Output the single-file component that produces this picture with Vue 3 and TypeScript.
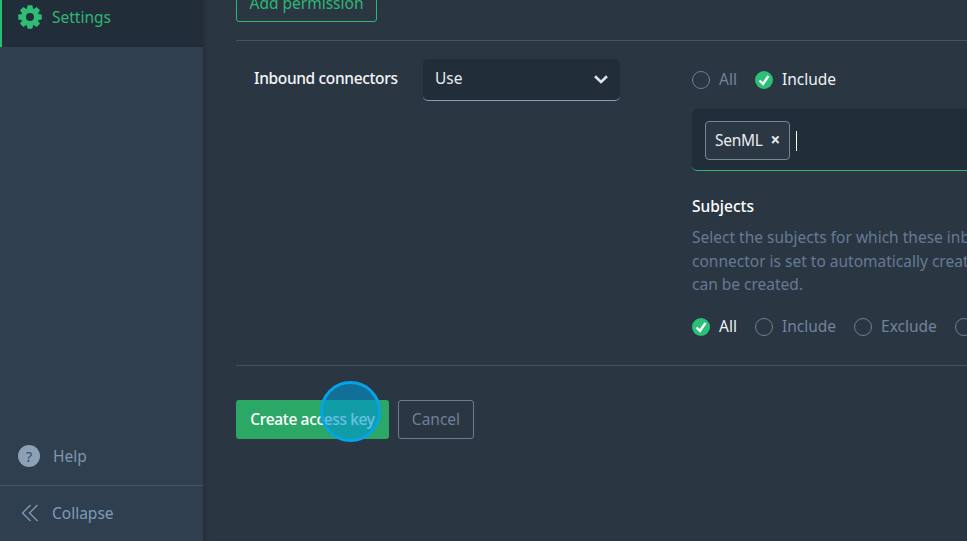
<script setup lang="ts">
const subjectOptions = [
  { label: 'All', checked: true },
  { label: 'Include', checked: false },
  { label: 'Exclude', checked: false },
  { label: '', checked: false }
]

// eight chunky teeth, same shape as the cog in the nav
function gearPath(): string {
  const pts: string[] = []
  for (let i = 0; i < 8; i++) {
    const a = (i * Math.PI) / 4 - Math.PI / 2
    const steps: [number, number][] = [[8.8, -0.36], [12, -0.2], [12, 0.2], [8.8, 0.36]]
    for (const [r, d] of steps) {
      pts.push(`${(12 + r * Math.cos(a + d)).toFixed(2)} ${(12 + r * Math.sin(a + d)).toFixed(2)}`)
    }
  }
  return `M${pts.join('L')}ZM12 8a4 4 0 1 0 0 8 4 4 0 0 0 0-8Z`
}
const gear = gearPath()
</script>

<template>
  <div class="page">
    <aside class="sidebar">
      <div class="nav-active">
        <svg class="gear" viewBox="0 0 24 24" width="24" height="24">
          <path fill-rule="evenodd" :d="gear" />
        </svg>
        <span>Settings</span>
      </div>
      <div class="sidebar-bottom">
        <div class="help">
          <span class="help-icon">?</span>
          <span>Help</span>
        </div>
        <div class="collapse">
          <svg viewBox="0 0 18 18" width="18" height="18" fill="none" stroke="currentColor" stroke-width="1.3">
            <path d="M9.500 1 1.500 9l8 8M16.500 1l-8 8 8 8" />
          </svg>
          <span>Collapse</span>
        </div>
      </div>
    </aside>

    <main class="content">
      <div class="top-row">
        <button class="btn-outline">Add permission</button>
      </div>
      <div class="permission">
        <div class="perm-label">Inbound connectors</div>
        <div class="select">
          <span>Use</span>
          <svg viewBox="0 0 14 9" width="14" height="9" fill="none" stroke="#dde3ea" stroke-width="2.600">
            <path d="M1 1.200 7 7l6-5.800" />
          </svg>
        </div>
        <div class="perm-detail">
          <div class="radios first">
            <label class="radio"><i class="circle" /><span>All</span></label>
            <label class="radio on"><i class="circle checked"><svg viewBox="0 0 18 18" width="18" height="18" fill="none" stroke="#fff" stroke-width="2.400"><path d="M4.500 9.500 8 13l5.500-8" /></svg></i><span>Include</span></label>
          </div>
          <div class="tag-input">
            <span class="chip">SenML <b>×</b></span>
            <span class="caret" />
          </div>
          <h4>Subjects</h4>
          <p>Select the subjects for which these inbound connectors can be used. If the<br>connector is set to automatically create subjects, only the selected subjects<br>can be created.</p>
          <div class="radios">
            <label v-for="opt in subjectOptions" :key="opt.label" class="radio" :class="{ on: opt.checked }">
              <i class="circle" :class="{ checked: opt.checked }">
                <svg v-if="opt.checked" viewBox="0 0 18 18" width="18" height="18" fill="none" stroke="#fff" stroke-width="2.400"><path d="M4.500 9.500 8 13l5.500-8" /></svg>
              </i>
              <span v-if="opt.label">{{ opt.label }}</span>
            </label>
          </div>
        </div>
      </div>
      <div class="actions">
        <button class="btn-primary">Create access key</button>
        <button class="btn-cancel">Cancel</button>
        <span class="click-dot" />
      </div>
    </main>
  </div>
</template>

<style>
html, body {
  margin: 0;
  overflow: hidden;
  background: #2b3643;
}
</style>

<style scoped>
.page {
  display: flex;
  width: 967px;
  height: 541px;
  overflow: hidden;
  font-family: "Noto Sans", "Open Sans", sans-serif;
  font-size: 15.500px;
  color: #fff;
}

.sidebar {
  width: 203px;
  flex: none;
  display: flex;
  flex-direction: column;
  background: #2f3f4f;
}

.nav-active {
  height: 47px;
  box-sizing: border-box;
  border-left: 2px solid #2bbd72;
  padding: 0 0 13px 16px;
  display: flex;
  align-items: center;
  gap: 10px;
  background: #222d3a;
  color: #2fb673;
}

.gear { fill: #2fbd75; }

.sidebar-bottom { margin-top: auto; }

.help {
  height: 55px;
  display: flex;
  align-items: center;
  padding: 0 0 4px 18px;
  box-sizing: border-box;
  gap: 13px;
  color: #7f96ad;
  border-bottom: 1px solid #43566a;
}

.help-icon {
  width: 22px;
  height: 22px;
  border-radius: 50%;
  background: #8ba1b8;
  color: #3d4d5e;
  display: flex;
  align-items: center;
  justify-content: center;
  font-size: 15px;
}

.collapse {
  height: 55px;
  display: flex;
  align-items: center;
  padding: 0 0 2px 21px;
  box-sizing: border-box;
  gap: 13px;
  color: #7f9bb7;
}

.content {
  flex: 1;
  min-width: 0;
  padding: 0 0 0 33px;
  box-shadow: inset 6px 0 6px -6px rgba(0, 0, 0, .25);
}

.top-row {
  height: 41px;
  box-sizing: border-box;
  display: flex;
  align-items: flex-end;
  padding-bottom: 18px;
  border-bottom: 1px solid #46525f;
}

.btn-outline {
  flex: none;
  width: 141px;
  height: 38px;
  padding: 0 0 1px;
  border: 1px solid #2fb673;
  border-radius: 3px;
  background: transparent;
  color: #2fb673;
  font: inherit;
}

.permission {
  display: flex;
  height: 325px;
  box-sizing: border-box;
  border-bottom: 1px solid #46525f;
  padding-top: 18px;
}

.perm-label {
  width: 187px;
  flex: none;
  padding: 8px 0 0 18px;
  box-sizing: border-box;
  font-weight: 500;
  color: #f2f5f7;
  white-space: nowrap;
  letter-spacing: -.35px;
}

.select {
  width: 197px;
  height: 42px;
  flex: none;
  box-sizing: border-box;
  display: flex;
  align-items: center;
  justify-content: space-between;
  padding: 0 12px;
  border-bottom: 1px solid #8aa0b6;
  border-radius: 5px;
  background: #222d3a;
  color: #e6ebef;
}

.select span { margin-bottom: 3px; }

.perm-detail {
  margin-left: 72px;
  width: 500px;
  flex: none;
}

.radios {
  display: flex;
  gap: 18px;
  color: #71849b;
}

.radios.first {
  height: 42px;
  align-items: center;
}

.radio {
  display: flex;
  align-items: center;
  gap: 9px;
}

.radio span { margin-bottom: 2px; }

.radio.on { color: #eef2f5; }

.circle {
  width: 18px;
  height: 18px;
  flex: none;
  box-sizing: border-box;
  border: 1px solid #6d7e90;
  border-radius: 50%;
}

.circle.checked {
  border: 0;
  background: #2bc077;
}

.circle svg { display: block; }

.tag-input {
  height: 62px;
  margin-top: 8px;
  box-sizing: border-box;
  display: flex;
  align-items: center;
  gap: 6px;
  padding: 2px 13px 0;
  background: #222d3a;
  border-bottom: 1px solid #2fb673;
  border-radius: 5px;
}

.chip {
  height: 39px;
  box-sizing: border-box;
  display: flex;
  align-items: center;
  gap: 8px;
  padding: 0 9px 2px;
  border: 1px solid #75879a;
  border-radius: 4px;
  background: #2c3744;
  color: #e6ebef;
  letter-spacing: -.3px;
}

.chip b { font-size: 17px; }

.caret {
  width: 1px;
  height: 20px;
  background: #fff;
}

h4 {
  margin: 25px 0 0;
  font-size: 15.500px;
  font-weight: 500;
  line-height: 21px;
}

p {
  margin: 9px 0 0;
  line-height: 23.700px;
  color: #657a94;
  white-space: nowrap;
}

p + .radios { margin-top: 18px; }

.actions {
  position: relative;
  display: flex;
  gap: 9px;
  padding-top: 34px;
}

.btn-primary {
  width: 153px;
  height: 39px;
  padding: 0 0 2px;
  border: 0;
  border-radius: 3px;
  background: #2ca866;
  color: #fff;
  font: inherit;
  font-weight: 500;
  letter-spacing: -.35px;
}

.btn-cancel {
  width: 76px;
  height: 39px;
  padding: 0 0 2px;
  border: 1px solid #6d7c8d;
  border-radius: 3px;
  background: transparent;
  color: #6d8098;
  font: inherit;
}

.click-dot {
  position: absolute;
  left: 84px;
  top: 15px;
  width: 55px;
  height: 55px;
  border-radius: 50%;
  background: rgba(0, 150, 210, .6);
  border: 3px solid #05a3e8;
}
</style>
